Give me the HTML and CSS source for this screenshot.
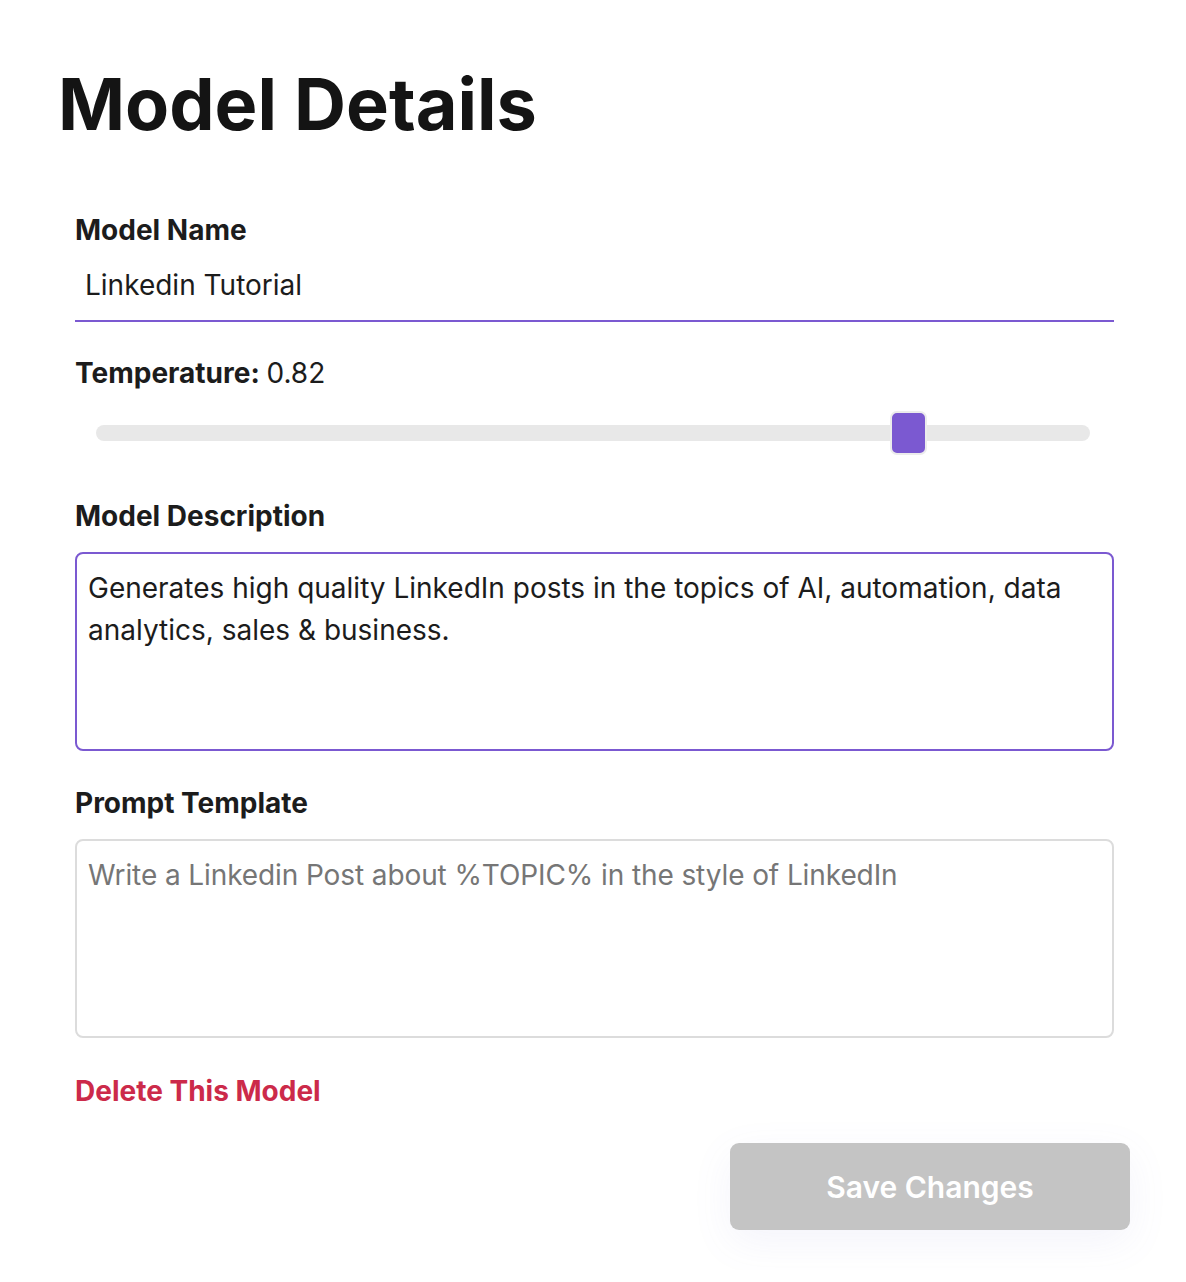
FILE: index.html
```html
<!DOCTYPE html>
<html lang="en">

<head>
	<meta charset="UTF-8">
	<meta name="viewport" content="width=device-width, initial-scale=1.0">
	<title>Model Details</title>
	<link rel="stylesheet" href="styles.css">
</head>

<body>
	<main class="page">
		<h1 class="title">Model Details</h1>

		<form class="form" onsubmit="return false;">
			<div class="field">
				<label class="label" for="name">Model Name</label>
				<input class="text-input" type="text" id="name" value="Linkedin Tutorial">
			</div>

			<div class="field field-temp">
				<div class="label"><b>Temperature:</b> <span class="temp-value">0.82</span></div>
				<div class="slider">
					<div class="slider-track"></div>
					<div class="slider-thumb" style="left: 82%;"></div>
				</div>
			</div>

			<div class="field field-desc">
				<label class="label" for="desc">Model Description</label>
				<textarea class="area area-active" id="desc">Generates high quality LinkedIn posts in the topics of AI, automation, data analytics, sales &amp; business.</textarea>
			</div>

			<div class="field field-prompt">
				<label class="label" for="prompt">Prompt Template</label>
				<textarea class="area" id="prompt" placeholder="Write a Linkedin Post about %TOPIC% in the style of LinkedIn"></textarea>
			</div>

			<a class="delete" href="#">Delete This Model</a>
		</form>

		<div class="actions">
			<button class="save" type="button" disabled>Save Changes</button>
		</div>
	</main>
</body>

</html>
```

FILE: styles.css
```css
* {
	box-sizing: border-box;
}

body {
	margin: 0;
	background: #fff;
	color: #1c1c1c;
	font-family: Inter, "Noto Sans", sans-serif;
}

.page {
	padding: 61px 56px 40px 58px;
}

.title {
	margin: 0;
	font-size: 72px;
	line-height: 1.2;
	font-weight: 700;
	color: #141414;
}

.form {
	padding: 0 16px 0 17px;
	margin-top: 65px;
}

.field {
	display: flex;
	flex-direction: column;
}

.label {
	font-size: 28px;
	line-height: 36px;
	font-weight: 700;
	color: #1c1c1c;
}

.label b {
	font-weight: 700;
}

.temp-value {
	font-weight: 400;
}

.text-input {
	font-family: inherit;
	font-size: 28px;
	line-height: 36px;
	color: #1c1c1c;
	border: none;
	border-bottom: 2px solid #7b59d1;
	padding: 19px 10px 17px;
	outline: none;
	background: transparent;
}

.field-temp {
	margin-top: 33px;
}

.slider {
	position: relative;
	margin: 20px 24px 0 21px;
	height: 44px;
}

.slider-track {
	position: absolute;
	left: 0;
	right: 0;
	top: 14px;
	height: 16px;
	border-radius: 8px;
	background: #e8e8e8;
}

.slider-thumb {
	position: absolute;
	top: 0;
	width: 37px;
	height: 44px;
	margin-left: -21px;
	border-radius: 7px;
	background: #7b59d1;
	border: 2px solid #ececec;
}

.field-desc {
	margin-top: 43px;
}

.field-prompt {
	margin-top: 34px;
}

.area {
	margin-top: 18px;
	height: 199px;
	resize: none;
	font-family: inherit;
	font-size: 28px;
	line-height: 42px;
	color: #1c1c1c;
	padding: 13px 11px;
	border: 2px solid #dcdcdc;
	border-radius: 8px;
	outline: none;
}

.area-active {
	border-color: #7b59d1;
}

.area::placeholder {
	color: #767676;
	letter-spacing: -0.1px;
}

.delete {
	display: inline-block;
	margin-top: 35px;
	font-size: 28px;
	line-height: 36px;
	font-weight: 700;
	color: #cc2a4a;
	text-decoration: none;
}

.actions {
	display: flex;
	justify-content: flex-end;
	margin-top: 34px;
}

.save {
	width: 400px;
	height: 87px;
	border: none;
	border-radius: 9px;
	background: #c4c4c4;
	color: #fff;
	font-family: inherit;
	font-size: 30px;
	font-weight: 600;
	box-shadow: 0 12px 40px rgba(120, 120, 200, 0.08);
}
```
